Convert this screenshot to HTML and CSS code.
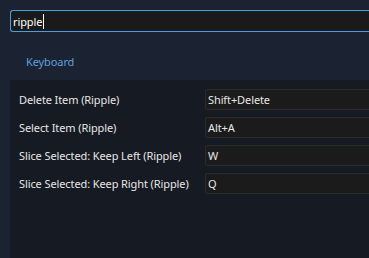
FILE: index.html
```html
<!DOCTYPE html>
<html>
<head>
<meta charset="utf-8">
<link rel="stylesheet" href="styles.css">
</head>
<body>
<div class="app">
  <div class="search"><span class="query">ripple</span><span class="caret"></span></div>
  <div class="tabs"><span class="tab">Keyboard</span></div>
  <div class="panel">
    <div class="row"><span class="label">Delete Item (Ripple)</span><div class="field">Shift+Delete</div></div>
    <div class="row"><span class="label">Select Item (Ripple)</span><div class="field">Alt+A</div></div>
    <div class="row"><span class="label">Slice Selected: Keep Left (Ripple)</span><div class="field">W</div></div>
    <div class="row"><span class="label">Slice Selected: Keep Right (Ripple)</span><div class="field">Q</div></div>
  </div>
</div>
</body>
</html>
```
FILE: styles.css
```css
html, body {
  margin: 0;
  padding: 0;
  width: 369px;
  height: 258px;
  overflow: hidden;
  background: #1b2332;
}
.app {
  font-family: "Noto Sans", "DejaVu Sans", sans-serif;
  font-size: 11px;
  letter-spacing: -0.1px;
  color: #e6e6e6;
  padding: 10px 0 0 10px;
  display: flex;
  flex-direction: column;
  height: 248px;
  box-sizing: border-box;
}
.search {
  height: 22px;
  box-sizing: border-box;
  border: 1px solid #4a9ee6;
  border-right: none;
  border-radius: 3px 0 0 3px;
  background: #1a1a1a;
  display: flex;
  align-items: center;
  padding-left: 2px;
  color: #ffffff;
}
.caret {
  width: 1px;
  height: 15px;
  background: #ffffff;
  margin-left: 1px;
}
.tabs {
  height: 48px;
  box-sizing: border-box;
  display: flex;
  align-items: flex-start;
  padding: 22px 0 0 16px;
}
.tab {
  color: #5e9fdc;
}
.panel {
  flex: 1;
  background: #161a23;
  padding: 9px 0 0 9px;
  display: flex;
  flex-direction: column;
  gap: 7px;
  margin-bottom: -10px;
}
.row {
  display: flex;
  align-items: center;
  height: 21px;
}
.label {
  width: 186px;
  flex: none;
}
.field {
  flex: 1;
  height: 21px;
  box-sizing: border-box;
  border: 1px solid #2b2b2b;
  border-right: none;
  border-radius: 3px 0 0 3px;
  background: #1b1b1b;
  display: flex;
  align-items: center;
  padding-left: 2px;
}
```
